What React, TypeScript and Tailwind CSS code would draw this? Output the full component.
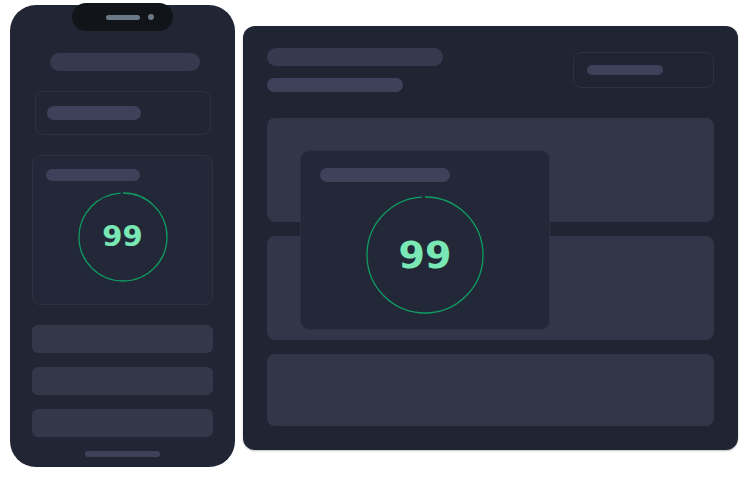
import React from 'react';

function Gauge({ size, value, textClass }: { size: number; value: number; textClass: string }) {
  const r = size / 2 - 1;
  const c = 2 * Math.PI * r;
  return (
    <div className="relative flex items-center justify-center" style={{ width: size, height: size }}>
      <svg width={size} height={size} className="absolute inset-0 -rotate-90">
        <circle cx={size / 2} cy={size / 2} r={r} fill="none" stroke="#0f9b62" strokeWidth="1.3"
          strokeDasharray={`${(c * value) / 100} ${c}`} />
      </svg>
      <span className={`font-['DejaVu_Sans',sans-serif] font-bold text-[#7ae8b5] ${textClass}`}>{value}</span>
    </div>
  );
}

function Phone() {
  return (
    <div className="relative mt-[5px] flex h-[462px] w-[225px] shrink-0 flex-col items-center rounded-[26px] bg-[#222634] px-[22px]">
      <div className="absolute left-[62px] top-[-2px] flex h-[28px] w-[101px] items-center gap-[8px] rounded-[14px] bg-[#111419] pl-[34px]">
        <div className="h-[5px] w-[34px] rounded-full bg-[#6b7886]" />
        <div className="h-[6px] w-[6px] rounded-full bg-[#6b7886]" />
      </div>
      <div className="ml-[5px] mt-[48px] h-[18px] w-[150px] rounded-full bg-[#363a4f]" />
      <div className="mt-[20px] flex h-[44px] w-[176px] items-center rounded-[8px] border border-[#2d3142] px-[11px]">
        <div className="h-[14px] w-[94px] rounded-full bg-[#3d4159]" />
      </div>
      <div className="mt-[20px] flex h-[150px] w-[181px] flex-col rounded-[8px] border border-[#2d3142] bg-[#232838] px-[13px] pt-[13px]">
        <div className="h-[12px] w-[94px] rounded-full bg-[#3d4159]" />
        <div className="mt-[11px] flex justify-center">
          <Gauge size={90} value={99} textClass="text-[29px]" />
        </div>
      </div>
      <div className="mt-[20px] flex w-[181px] flex-col gap-[14px]">
        <div className="h-[28px] rounded-[6px] bg-[#333749]" />
        <div className="h-[28px] rounded-[6px] bg-[#333749]" />
        <div className="h-[28px] rounded-[6px] bg-[#333749]" />
      </div>
      <div className="mt-[14px] h-[6px] w-[75px] rounded-full bg-[#3d4159]" />
    </div>
  );
}

function Desktop() {
  return (
    <div className="relative mt-[26px] flex h-[424px] w-[495px] shrink-0 flex-col rounded-[12px] bg-[#202534] px-[24px] pt-[22px] shadow-[0_1px_2px_rgba(0,0,0,0.25)]">
      <div className="flex items-start justify-between">
        <div className="flex flex-col gap-[12px]">
          <div className="h-[18px] w-[176px] rounded-full bg-[#363a4f]" />
          <div className="h-[14px] w-[136px] rounded-full bg-[#3d4159]" />
        </div>
        <div className="mt-[4px] flex h-[36px] w-[141px] items-center rounded-[8px] border border-[#2d3142] px-[13px]">
          <div className="h-[10px] w-[76px] rounded-full bg-[#3d4159]" />
        </div>
      </div>
      <div className="mt-[26px] flex flex-col gap-[14px]">
        <div className="h-[104px] rounded-[8px] bg-[#323649]" />
        <div className="h-[104px] rounded-[8px] bg-[#323649]" />
        <div className="h-[72px] rounded-[8px] bg-[#323649]" />
      </div>
      <div className="absolute left-[57px] top-[124px] flex h-[180px] w-[250px] flex-col rounded-[10px] border border-[#2b3042] bg-[#232838] px-[19px] pt-[17px]">
        <div className="h-[14px] w-[130px] rounded-full bg-[#3d4159]" />
        <div className="mt-[14px] flex justify-center">
          <Gauge size={118} value={99} textClass="text-[38px]" />
        </div>
      </div>
    </div>
  );
}

export default function App() {
  return (
    <div className="flex h-[500px] w-[750px] items-start gap-[8px] bg-white pl-[10px]">
      <Phone />
      <Desktop />
    </div>
  );
}
